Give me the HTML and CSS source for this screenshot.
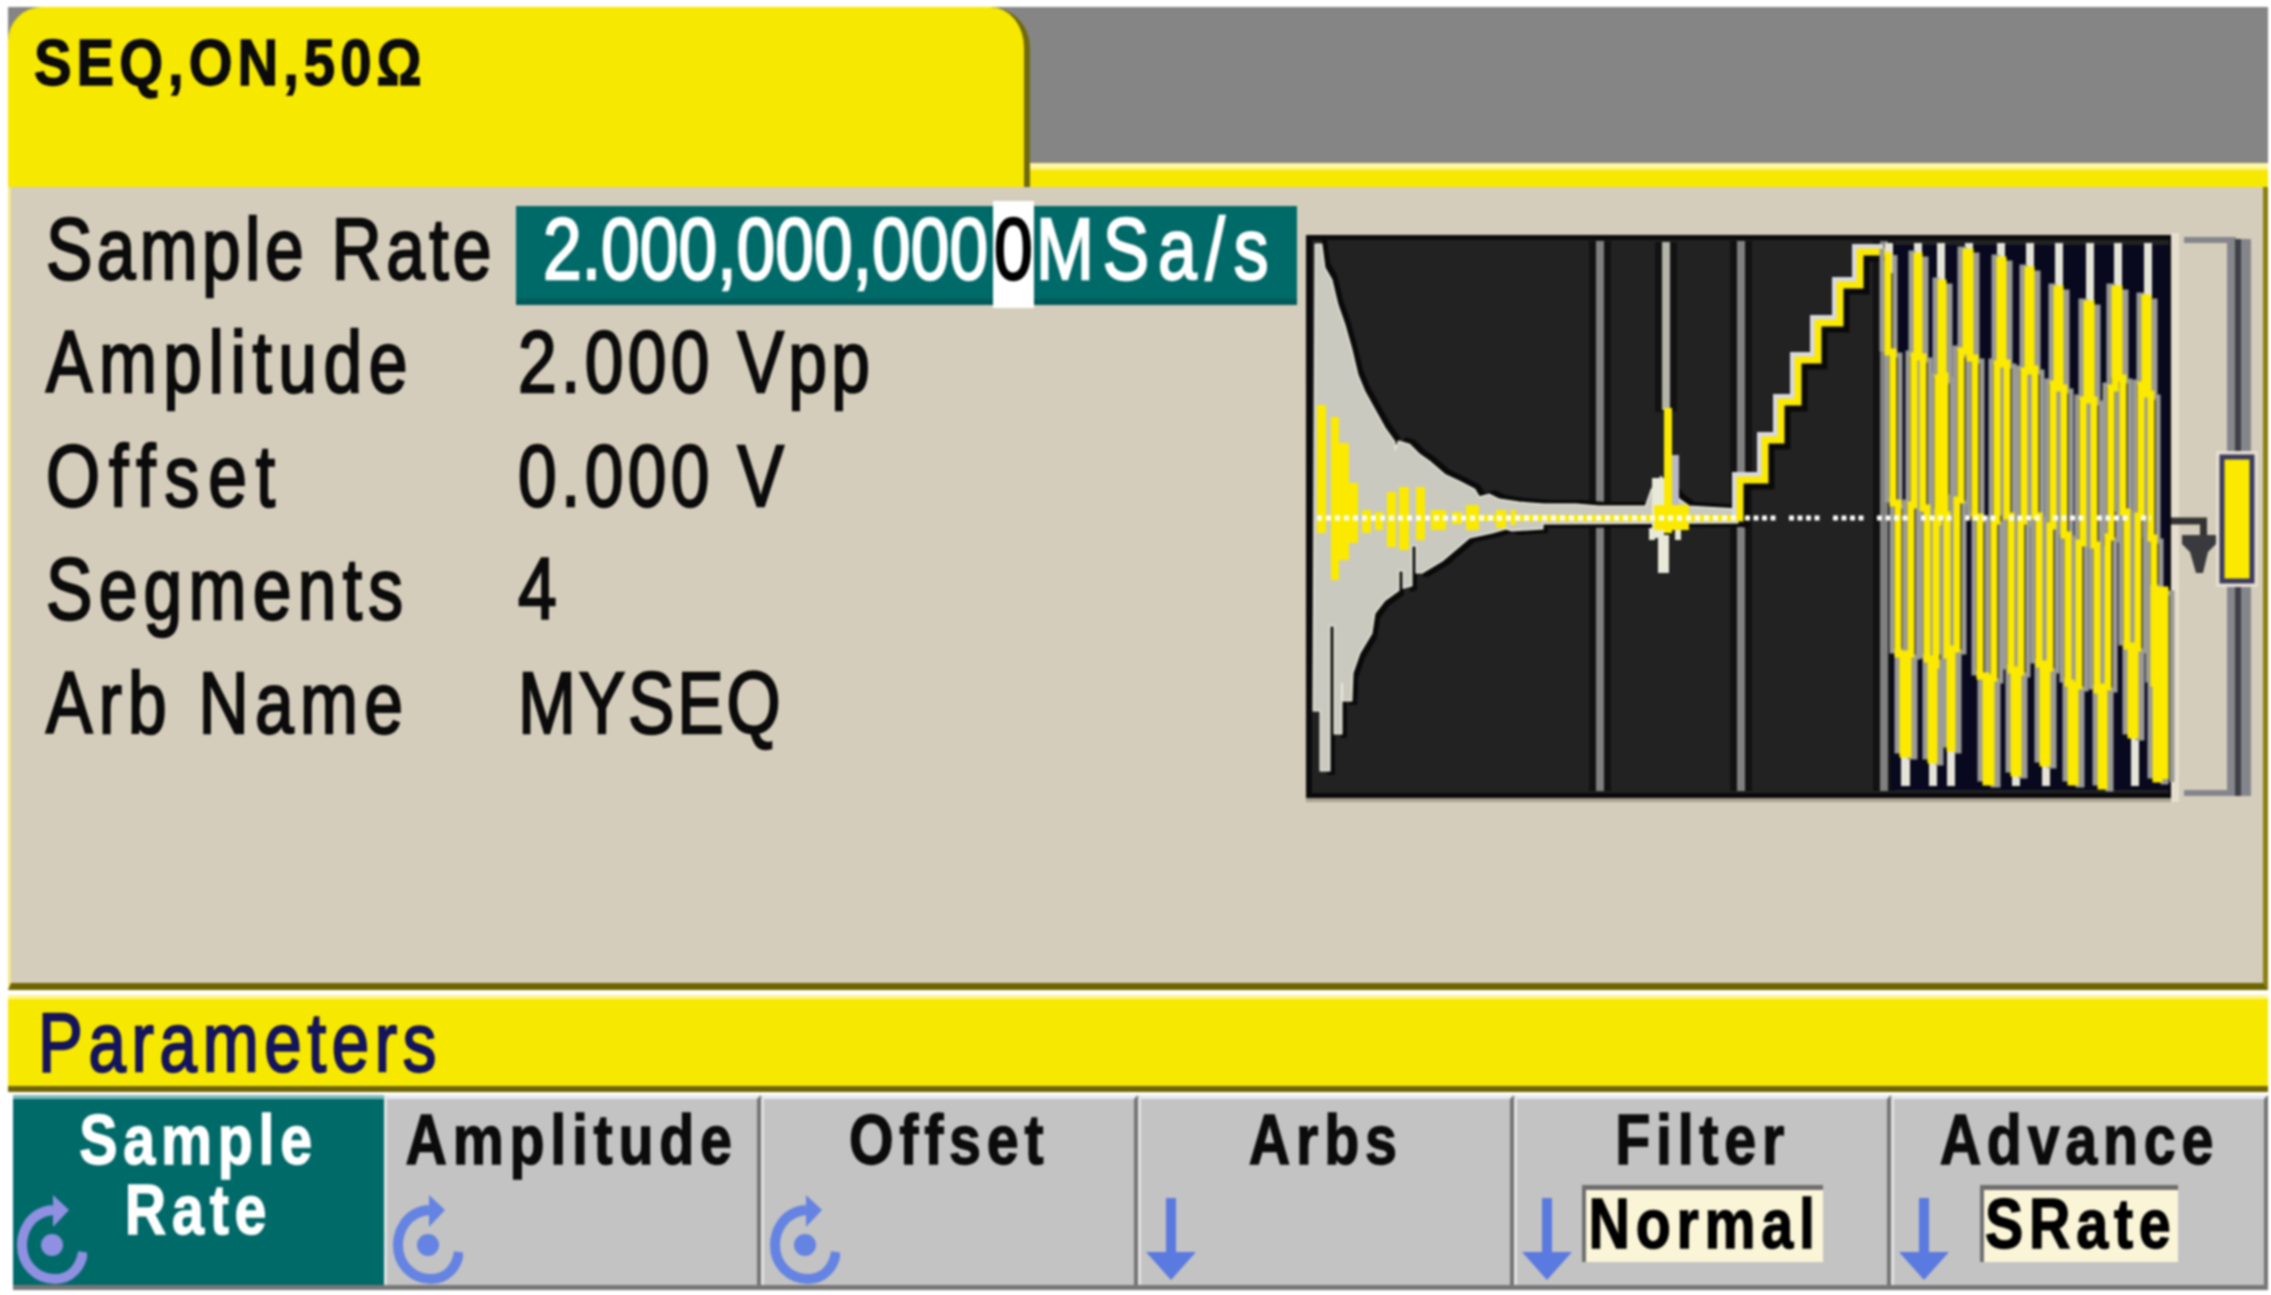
FILE: index.html
```html
<!DOCTYPE html>
<html lang="en">
<head>
<meta charset="utf-8">
<title>SEQ,ON,50Ω</title>
<link rel="stylesheet" href="styles.css">
</head>
<body>
<div class="screen">
  <header class="head">
    <div class="tab"><span class="t t-tab">SEQ,ON,50Ω</span></div>
    <div class="tabrest"><div class="tabgrey"></div><div class="tabstrip"></div></div>
  </header>
  <section class="panel">
    <div class="params">
      <div class="row"><span class="t ls-sample">Sample Rate</span><span class="edit"><span class="digits"><span class="t ls-digits">2.000,000,000</span></span><span class="cursor"><span class="t ls-digits">0</span></span><span class="unit"><span class="t ls-unit">MSa/s</span></span></span></div>
      <div class="row"><span class="t ls-amp">Amplitude</span><span class="t ls-vpp">2.000 Vpp</span></div>
      <div class="row"><span class="t ls-off">Offset</span><span class="t ls-vpp">0.000 V</span></div>
      <div class="row"><span class="t ls-seg">Segments</span><span class="t ls-vpp">4</span></div>
      <div class="row"><span class="t ls-seg">Arb Name</span><span class="t ls-my">MYSEQ</span></div>
    </div>
    <svg class="scope" viewBox="1300 230 960 580" width="960" height="580" aria-label="Waveform preview">
      <defs>
        <path id="chirp" d="M1889 252V352H1894V503H1899V654H1904V754H1909V654H1912V505H1915V356H1918V256H1920V357H1924V508H1928V659H1932V760H1935V665H1937V522H1939V378H1942V283H1944V376H1946V515H1948V655H1951V748H1953V649H1958V500H1962V351H1967V252H1971V358H1976V517H1981V676H1987V782H1992V678H1995V521H1998V364H2001V260H2004V363H2008V516H2012V670H2015V773H2019V672H2022V521H2025V371H2029V270H2032V369H2036V516H2040V664H2044V763H2048V668H2051V526H2054V384H2058V289H2061V388H2065V535H2069V683H2072V782H2076V686H2080V543H2084V400H2088V304H2092V400H2095V545H2098V690H2102V786H2105V687H2109V537H2112V388H2116V289H2120V378H2124V512H2128V646H2132V735H2136V648H2139V516H2142V385H2146V298H2149V394H2152V538H2155V683H2157V779H2160V590H2166V779"/>
        <path id="stairs" d="M1738 518H1741V480H1766V440H1782V402H1799V360H1819V323H1841V285H1861V252H1889"/>
        <polygon id="env" points="1317,245 1322,245 1325,268 1332,280 1338,305 1345,325 1352,350 1358,375 1365,392 1375,410 1385,428 1395,442 1396,452 1400,442 1410,445 1420,455 1430,462 1445,475 1460,482 1475,490 1480,498 1490,495 1500,500 1520,503 1545,505 1577,505 1600,507 1647,507 1653,490 1662,478 1680,500 1690,507 1738,510 1738,522 1543,523 1543,528 1513,530 1507,528 1493,532 1470,537 1463,543 1443,560 1423,572 1418,572 1418,545 1412,545 1412,585 1405,587 1405,570 1399,570 1399,590 1385,600 1375,613 1372,633 1360,653 1353,673 1352,700 1344,700 1344,683 1342,683 1342,733 1336,733 1336,625 1330,625 1330,770 1322,770 1322,710 1315,710"/>
      </defs>
      <rect class="halo" x="2172" y="233" width="8" height="569"/>
      <rect class="lip" x="1307" y="240" width="865" height="562"/>
      <rect class="edge" x="1307" y="235" width="865" height="563"/>
      <rect class="bg" x="1313" y="240" width="857" height="553"/>
      <g class="shade">
        <rect x="1590" y="241" width="22" height="550"/>
        <rect x="1731" y="241" width="22" height="550"/>
        <rect x="1874" y="241" width="22" height="550"/>
        <rect x="1656" y="242" width="22" height="170"/>
      </g>
      <g class="grid">
        <rect x="1597" y="241" width="8" height="550"/>
        <rect x="1738" y="241" width="8" height="550"/>
        <rect x="1881" y="241" width="8" height="550"/>
      </g>
      <rect class="spikeline" x="1663" y="242" width="8" height="168"/>
      <rect class="chirpbg" x="1892" y="245" width="278" height="545"/>
      <use href="#env" class="envshadow" x="6" y="0"/>
      <use href="#env" class="envshadow" x="6" y="5"/>
      <use href="#env" class="envshadow" x="6" y="-5"/>
      <use href="#env" class="envlight"/>
      <use href="#env" class="envbody" x="0" y="0"/>
      <g class="spike">
        <rect x="1653" y="478" width="12" height="60"/>
        <rect x="1650" y="528" width="6" height="12"/>
        <rect x="1676" y="528" width="6" height="12"/>
        <rect x="1659" y="535" width="11" height="38"/>
      </g>
      <rect class="spikegrey" x="1673" y="455" width="7" height="75"/>
      <g class="yellow">
        <rect x="1318" y="405" width="9" height="128"/>
        <rect x="1332" y="417" width="8" height="163"/>
        <rect x="1340" y="443" width="10" height="117"/>
        <rect x="1350" y="483" width="9" height="60"/>
        <rect x="1363" y="510" width="9" height="23"/>
        <rect x="1376" y="512" width="8" height="18"/>
        <rect x="1388" y="492" width="9" height="55"/>
        <rect x="1400" y="487" width="10" height="63"/>
        <rect x="1417" y="487" width="9" height="53"/>
        <rect x="1432" y="510" width="15" height="20"/>
        <rect x="1453" y="512" width="10" height="12"/>
        <rect x="1467" y="505" width="13" height="25"/>
        <rect x="1497" y="510" width="10" height="18"/>
        <rect x="1512" y="510" width="5" height="15"/>
        <rect x="1480" y="515" width="260" height="6"/>
        <rect x="1665" y="408" width="8" height="125"/>
        <rect x="1655" y="505" width="35" height="25"/>
      </g>
      <use href="#stairs" class="st-dark" x="6" y="6"/>
      <use href="#stairs" class="st-light" x="-5" y="-5"/>
      <use href="#stairs" class="st-yellow"/>
      <g class="tops">
        <rect x="1886" y="243" width="8" height="30"/>
        <rect x="1915" y="243" width="8" height="20"/>
        <rect x="1938" y="243" width="8" height="40"/>
        <rect x="1966" y="243" width="8" height="15"/>
        <rect x="1998" y="243" width="8" height="20"/>
        <rect x="2027" y="243" width="8" height="28"/>
        <rect x="2056" y="243" width="8" height="48"/>
        <rect x="2087" y="243" width="8" height="60"/>
        <rect x="2115" y="243" width="8" height="48"/>
        <rect x="2145" y="243" width="8" height="55"/>
        <rect x="1902" y="750" width="9" height="36"/>
        <rect x="1930" y="755" width="8" height="31"/>
        <rect x="1948" y="748" width="8" height="38"/>
        <rect x="2013" y="770" width="8" height="16"/>
        <rect x="2043" y="760" width="8" height="26"/>
        <rect x="2132" y="730" width="8" height="56"/>
      </g>
      <use href="#chirp" class="ch-light" x="-6" y="-3"/>
      <use href="#chirp" class="ch-light" x="7" y="3"/>
      <use href="#chirp" class="ch-yellow"/>
      <line class="zero" x1="1318" y1="518" x2="1738" y2="518"/>
      <line class="zerogap" x1="1746" y1="518" x2="2152" y2="518"/>
      <path class="trig" d="M2172 521H2204.5V536"/>
      <path class="trighead" d="M2183 535H2217V544L2209 552L2204 573H2197L2191 552L2183 544Z"/>
      <rect class="rail" x="2185" y="237" width="52" height="6"/>
      <rect class="rail" x="2185" y="790" width="52" height="6"/>
      <rect class="rail" x="2228" y="239" width="24" height="557"/>
      <rect class="railcore" x="2236" y="239" width="6" height="557"/>
      <rect class="slidehalo" x="2217" y="451" width="42" height="136"/>
      <rect class="slider" x="2223" y="457" width="30" height="124"/>
    </svg>
  </section>
  <div class="menu"><span class="t t-menu">Parameters</span></div>
  <nav class="keys">
    <div class="key on">
      <div class="keytext">Sample<br>Rate</div>
      <svg class="knob" viewBox="0 0 70 90" width="70" height="90"><path d="M36 15C12 17 5 38 5 50C5 70 20 84 38 84C54 84 64 72 66 57"/><polygon points="36,0 52,15 36,32"/><circle cx="35" cy="50" r="11"/></svg>
    </div>
    <div class="key">
      <div class="keytext">Amplitude</div>
      <svg class="knob" viewBox="0 0 70 90" width="70" height="90"><path d="M36 15C12 17 5 38 5 50C5 70 20 84 38 84C54 84 64 72 66 57"/><polygon points="36,0 52,15 36,32"/><circle cx="35" cy="50" r="11"/></svg>
    </div>
    <div class="key">
      <div class="keytext">Offset</div>
      <svg class="knob" viewBox="0 0 70 90" width="70" height="90"><path d="M36 15C12 17 5 38 5 50C5 70 20 84 38 84C54 84 64 72 66 57"/><polygon points="36,0 52,15 36,32"/><circle cx="35" cy="50" r="11"/></svg>
    </div>
    <div class="key">
      <div class="keytext">Arbs</div>
      <svg class="down" viewBox="0 0 50 82" width="50" height="82"><rect x="20" y="0" width="10" height="56"/><polygon points="0,54 50,54 25,82"/></svg>
    </div>
    <div class="key">
      <div class="keytext">Filter</div>
      <div class="keyval normal"><span class="keyvaltext">Normal</span></div>
      <svg class="down" viewBox="0 0 50 82" width="50" height="82"><rect x="20" y="0" width="10" height="56"/><polygon points="0,54 50,54 25,82"/></svg>
    </div>
    <div class="key">
      <div class="keytext">Advance</div>
      <div class="keyval srate"><span class="keyvaltext">SRate</span></div>
      <svg class="down" viewBox="0 0 50 82" width="50" height="82"><rect x="20" y="0" width="10" height="56"/><polygon points="0,54 50,54 25,82"/></svg>
    </div>
  </nav>
</div>
</body>
</html>
```

FILE: styles.css
```css
* { box-sizing: border-box; }
html, body { margin: 0; padding: 0; background: #fff; }
body { width: 2271px; height: 1295px; overflow: hidden; }
.screen {
  width: 2271px;
  height: 1295px;
  padding-top: 7px;
  display: flex;
  flex-direction: column;
  font-family: "Liberation Sans", Arial, sans-serif;
  color: #0b0b0b;
  filter: blur(1.2px);
}
.t {
  display: inline-block;
  white-space: nowrap;
  transform: scaleX(0.8);
  transform-origin: 0 50%;
  -webkit-text-stroke: 2.4px currentColor;
}
.head { display: flex; height: 180px; margin-left: 8px; margin-right: 3px; background: #858585; }
.tab {
  width: 1022px;
  background: #f7e800;
  border-radius: 34px 40px 0 0;
  border-right: 6px solid #6f6a10;
  padding: 20px 0 0 26px;
  font-weight: 700;
  font-size: 64px;
  line-height: 72px;
}
.t-tab { transform: scaleX(0.88); letter-spacing: 5.7px; -webkit-text-stroke: 1.4px currentColor; }
.tabrest { flex: 1; display: flex; flex-direction: column; }
.tabgrey { flex: 1; background: #858585; }
.tabstrip { height: 24px; background: linear-gradient(#fff6a0 0, #fff6a0 5px, #f7e800 8px); }
.panel {
  display: flex;
  height: 803px;
  margin-left: 8px;
  margin-right: 3px;
  background: #d5cdbb;
  border-left: 3px solid #efe98a;
  border-right: 5px solid #8a7f10;
  border-bottom: 7px solid #6f6500;
  padding: 5px 0 0 35px;
}
.params { width: 1254px; }
.row {
  display: grid;
  grid-template-columns: 472px 1fr;
  height: 113.5px;
  align-items: center;
  font-size: 87px;
  line-height: 100px;
}
.ls-sample { letter-spacing: 5.4px; }
.ls-amp { letter-spacing: 8.1px; }
.ls-off { letter-spacing: 11.2px; }
.ls-seg { letter-spacing: 7.8px; }
.ls-vpp { letter-spacing: 5.4px; }
.ls-my { letter-spacing: 3.5px; }
.ls-digits { letter-spacing: 0; }
.ls-unit { letter-spacing: 11px; }
.edit {
  display: flex;
  width: 781px;
  height: 99px;
  margin: 13px 0 0 -2px;
  background: #006a69;
  border-bottom: 6px solid #005a5a;
  color: #fff;
}
.digits { width: 477px; padding-left: 27px; margin-top: -7px; }
.cursor { width: 41px; height: 107px; margin-top: -5px; background: #fff; color: #000; padding-left: 1px; line-height: 96px; }
.unit { flex: 1; margin-top: -7px; padding-left: 2px; }
.scope { display: block; margin-top: 38px; margin-left: -1px; }
.menu {
  height: 97px;
  margin: 5px 3px 0 8px;
  padding: 8px 0 0 30px;
  background: #f7e800;
  border-top: 4px solid #fff48a;
  border-bottom: 6px solid #6f6500;
  color: #14145c;
  font-size: 84px;
  line-height: 70px;
}
.t-menu { letter-spacing: 7.1px; }
.keys {
  display: grid;
  grid-template-columns: 371px repeat(5, minmax(0, 1fr));
  height: 195px;
  margin: 3px 3px 0 13px;
  border-bottom: 5px solid #777;
}
.key {
  position: relative;
  display: flex;
  flex-direction: column;
  align-items: center;
  min-width: 0;
  background: #c3c3c3;
  border-top: 4px solid #e8eaf2;
  border-left: 3px solid #e2e2e2;
  border-right: 4px solid #747474;
  font-weight: 700;
  font-size: 70px;
  letter-spacing: 7px;
  -webkit-text-stroke: 1.4px currentColor;
}
.key.on { background: #006a69; color: #fff; border: 0; border-top: 4px solid #7fb8c0; }
.keytext {
  flex: none;
  text-align: center;
  line-height: 70px;
  margin-top: 6px;
  white-space: nowrap;
  transform: scaleX(0.82);
}
.keyval {
  margin-top: 10px;
  height: 77px;
  display: flex;
  justify-content: center;
  background: #fbf5d8;
  border-top: 5px solid #6e6e6e;
  border-left: 4px solid #6e6e6e;
  color: #000;
  line-height: 68px;
}
.keyvaltext { flex: none; transform: scaleX(0.82); }
.normal { width: 241px; }
.srate { width: 198px; }
.knob { position: absolute; left: 6px; bottom: 0; }
.key.on .knob { left: 4px; }
.knob path { fill: none; stroke: #6483e2; stroke-width: 10; }
.knob polygon, .knob circle { fill: #6483e2; }
.key.on .knob path { stroke: #9090e2; }
.key.on .knob polygon, .key.on .knob circle { fill: #9090e2; }
.down { position: absolute; left: 5px; bottom: 5px; fill: #5a7ae0; }
/* waveform */
.halo { fill: #e6dfcf; }
.lip { fill: #a89f8c; }
.edge { fill: #0a0a0c; }
.bg { fill: #222; }
.chirpbg { fill: #08081e; }
.shade rect { fill: #121212; }
.grid rect { fill: #808080; }
.spikeline { fill: #b4b4a8; }
.envshadow { fill: #0a0a0a; }
.envlight { fill: #e9e9dc; stroke: #e9e9dc; stroke-width: 3; }
.envbody { fill: #c9c9c0; }
.spike rect { fill: #e9e9da; }
.spikegrey { fill: #b8b8c8; }
.yellow rect { fill: #fbea00; }
.st-dark { fill: none; stroke: #0a0a0a; stroke-width: 7; }
.st-light { fill: none; stroke: #d8d8e0; stroke-width: 6; }
.st-yellow { fill: none; stroke: #fbea00; stroke-width: 7; }
.tops rect { fill: #e4e4d8; }
.ch-light { fill: none; stroke: #9a9a98; stroke-width: 5; }
.ch-yellow { fill: none; stroke: #fbea00; stroke-width: 7; }
.zero { stroke: #fff; stroke-width: 5; stroke-dasharray: 5 4; }
.zerogap { stroke: #fff; stroke-width: 5; stroke-dasharray: 5 3.5 5 3.5 5 3.5 5 13.5; }
.trig { fill: none; stroke: #333; stroke-width: 7; }
.trighead { fill: #3a3a3e; }
.rail { fill: #85858c; }
.railcore { fill: #3f3f48; }
.slidehalo { fill: #e6dfcf; }
.slider { fill: #fbea00; stroke: #3a3a62; stroke-width: 5; }
```
